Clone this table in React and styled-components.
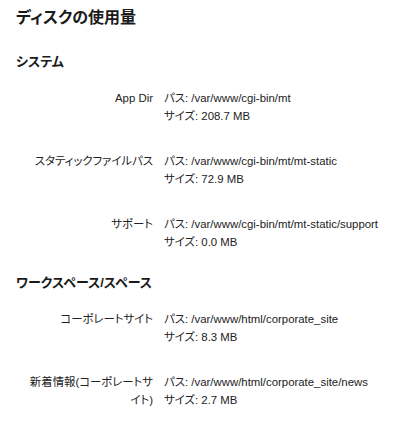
import React from "react";
import styled, { createGlobalStyle } from "styled-components";

const GlobalStyle = createGlobalStyle`
  html, body {
    margin: 0;
    padding: 0;
    background: #ffffff;
  }
  body {
    font-family: "Liberation Sans", "Noto Sans CJK JP", sans-serif;
    color: #1a1a1a;
  }
`;

const Page = styled.div`
  width: 400px;
  padding: 8px 16px 0;
  box-sizing: border-box;
`;

const Title = styled.h1`
  margin: 0;
  font-size: 16px;
  line-height: 20px;
  font-weight: 700;
  font-feature-settings: "palt";
`;

const SectionTitle = styled.h2`
  margin: ${(p) => (p.$first ? "25px" : "23px")} 0 0;
  font-size: 13px;
  line-height: 18px;
  font-weight: 700;
  font-feature-settings: "palt";
`;

const ItemList = styled.dl`
  display: grid;
  grid-template-columns: 137px 1fr;
  column-gap: 11px;
  row-gap: 27px;
  margin: 18px 0 0;
`;

const Label = styled.dt`
  margin: 0;
  padding-left: 10px;
  text-align: right;
  font-size: 11.4px;
  line-height: 18px;
  color: #222;
  font-feature-settings: "palt";
`;

const Detail = styled.dd`
  margin: 0;
  display: flex;
  flex-direction: column;
  font-size: 11.4px;
  line-height: 18px;
  color: #222;
  white-space: nowrap;
  font-feature-settings: "palt";
`;

const sections = [
  {
    name: "システム",
    items: [
      { label: "App Dir", path: "/var/www/cgi-bin/mt", size: "208.7 MB" },
      {
        label: "スタティックファイルパス",
        path: "/var/www/cgi-bin/mt/mt-static",
        size: "72.9 MB",
      },
      {
        label: "サポート",
        path: "/var/www/cgi-bin/mt/mt-static/support",
        size: "0.0 MB",
      },
    ],
  },
  {
    name: "ワークスペース/スペース",
    items: [
      {
        label: "コーポレートサイト",
        path: "/var/www/html/corporate_site",
        size: "8.3 MB",
      },
      {
        label: "新着情報(コーポレートサイト)",
        path: "/var/www/html/corporate_site/news",
        size: "2.7 MB",
      },
    ],
  },
];

const App = () => {
  return (
    <Page>
      <GlobalStyle />
      <Title>ディスクの使用量</Title>
      {sections.map((section, i) => (
        <section key={section.name}>
          <SectionTitle $first={i === 0}>{section.name}</SectionTitle>
          <ItemList>
            {section.items.map((item) => (
              <React.Fragment key={item.label}>
                <Label>{item.label}</Label>
                <Detail>
                  <span>パス: {item.path}</span>
                  <span>サイズ: {item.size}</span>
                </Detail>
              </React.Fragment>
            ))}
          </ItemList>
        </section>
      ))}
    </Page>
  );
};

export default App;
